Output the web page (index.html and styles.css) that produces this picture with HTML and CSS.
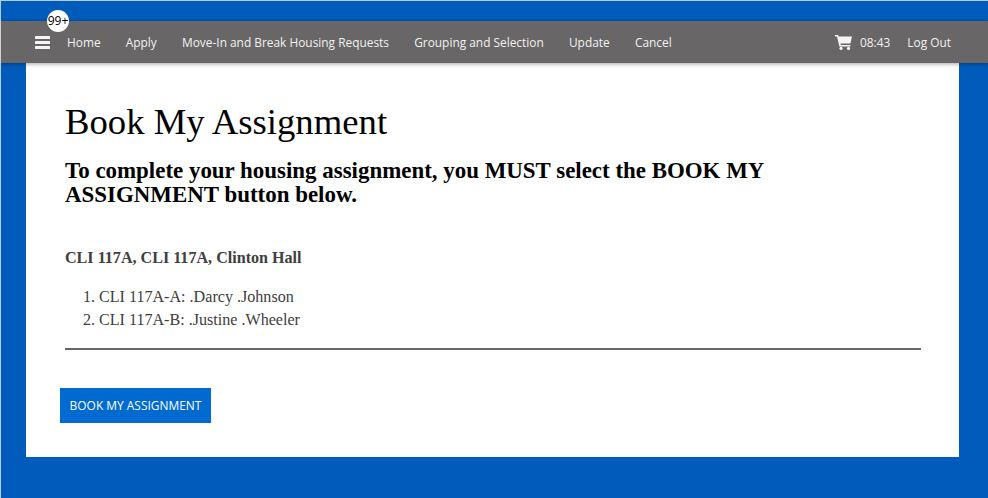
FILE: index.html
```html
<!DOCTYPE html>
<html lang="en">
<head>
<meta charset="utf-8">
<title>Book My Assignment</title>
<link rel="stylesheet" href="styles.css">
</head>
<body>
<nav class="nav">
  <span class="badge">99+</span>
  <svg class="burger" width="15" height="13" viewBox="0 0 15 13"><rect width="15" height="3" y="0" rx="0.5"/><rect width="15" height="3" y="5" rx="0.5"/><rect width="15" height="3" y="10" rx="0.5"/></svg>
  <ul class="links">
    <li>Home</li>
    <li>Apply</li>
    <li>Move-In and Break Housing Requests</li>
    <li>Grouping and Selection</li>
    <li>Update</li>
    <li>Cancel</li>
  </ul>
  <div class="right">
    <svg class="cart" width="17" height="15" viewBox="0 0 17 15"><path d="M0 0h3l.6 1.6H17l-1.6 7H5.4l.4 1.4h9.6v1.5H4.4L2 1.5H0z"/><circle cx="6" cy="13.4" r="1.6"/><circle cx="13.5" cy="13.4" r="1.6"/></svg>
    <span class="time">08:43</span>
    <span>Log Out</span>
  </div>
</nav>
<main class="card">
  <h1>Book My Assignment</h1>
  <h2>To complete your housing assignment, you MUST select the BOOK MY ASSIGNMENT button below.</h2>
  <h3>CLI 117A, CLI 117A, Clinton Hall</h3>
  <ol>
    <li>CLI 117A-A: .Darcy .Johnson</li>
    <li>CLI 117A-B: .Justine .Wheeler</li>
  </ol>
  <hr>
  <button class="book">BOOK MY ASSIGNMENT</button>
</main>
</body>
</html>
```
FILE: styles.css
```css
* { box-sizing: border-box; }
html, body { margin: 0; height: 100%; }
body {
  background: #005bbb;
  padding-top: 21px;
  font-family: "Liberation Serif", serif;
  overflow: hidden;
}
body::before {
  content: "";
  position: fixed;
  inset: 0;
  z-index: 2;
  border-top: 1px solid rgba(255,255,255,.7);
  border-left: 1px solid rgba(255,255,255,.7);
  pointer-events: none;
}
.nav {
  position: relative;
  z-index: 1;
  height: 42px;
  background: #686666;
  color: #f2f2f2;
  font-family: "Open Sans", sans-serif;
  font-size: 11.9px;
  display: flex;
  align-items: center;
  padding: 0 37px 0 35px;
  box-shadow: 0 1px 4px rgba(0,0,0,.35);
}
.badge {
  position: absolute;
  left: 47px;
  top: -11px;
  width: 22px;
  height: 22px;
  border-radius: 50%;
  background: #fff;
  color: #000;
  font-size: 12px;
  line-height: 21px;
  display: flex;
  justify-content: center;
  white-space: nowrap;
}
.burger { fill: #f4f4f4; margin-right: 17px; }
.links {
  list-style: none;
  display: flex;
  gap: 25.2px;
  margin: 0;
  padding: 0;
}
.right {
  margin-left: auto;
  display: flex;
  align-items: center;
}
.cart { fill: #f4f4f4; margin-right: 8px; }
.time { margin-right: 17px; }
.card {
  background: #fff;
  height: 394px;
  margin: 0 29px 0 26px;
  padding: 38px 38px 0 39px;
  color: #404040;
}
h1 {
  margin: 0;
  font-size: 36.7px;
  font-weight: 400;
  line-height: 41px;
  color: #000;
}
h2 {
  margin: 17px 0 0;
  font-size: 22.93px;
  font-weight: 700;
  line-height: 24px;
  color: #000;
}
h3 {
  margin: 42px 0 0;
  font-size: 16.1px;
  line-height: 18px;
  font-weight: 700;
}
ol {
  margin: 18px 0 0;
  padding: 0 0 0 34px;
  font-size: 16.1px;
  line-height: 23px;
}
hr {
  margin: 17px 0 0;
  border: 0;
  height: 2px;
  background: #666;
}
.book {
  display: block;
  margin: 38px 0 0 -5px;
  width: 151px;
  height: 35px;
  border: 0;
  padding: 0 0 1px;
  background: #006ad0;
  color: #fff;
  font-family: "Open Sans", sans-serif;
  font-size: 11.95px;
}
```
